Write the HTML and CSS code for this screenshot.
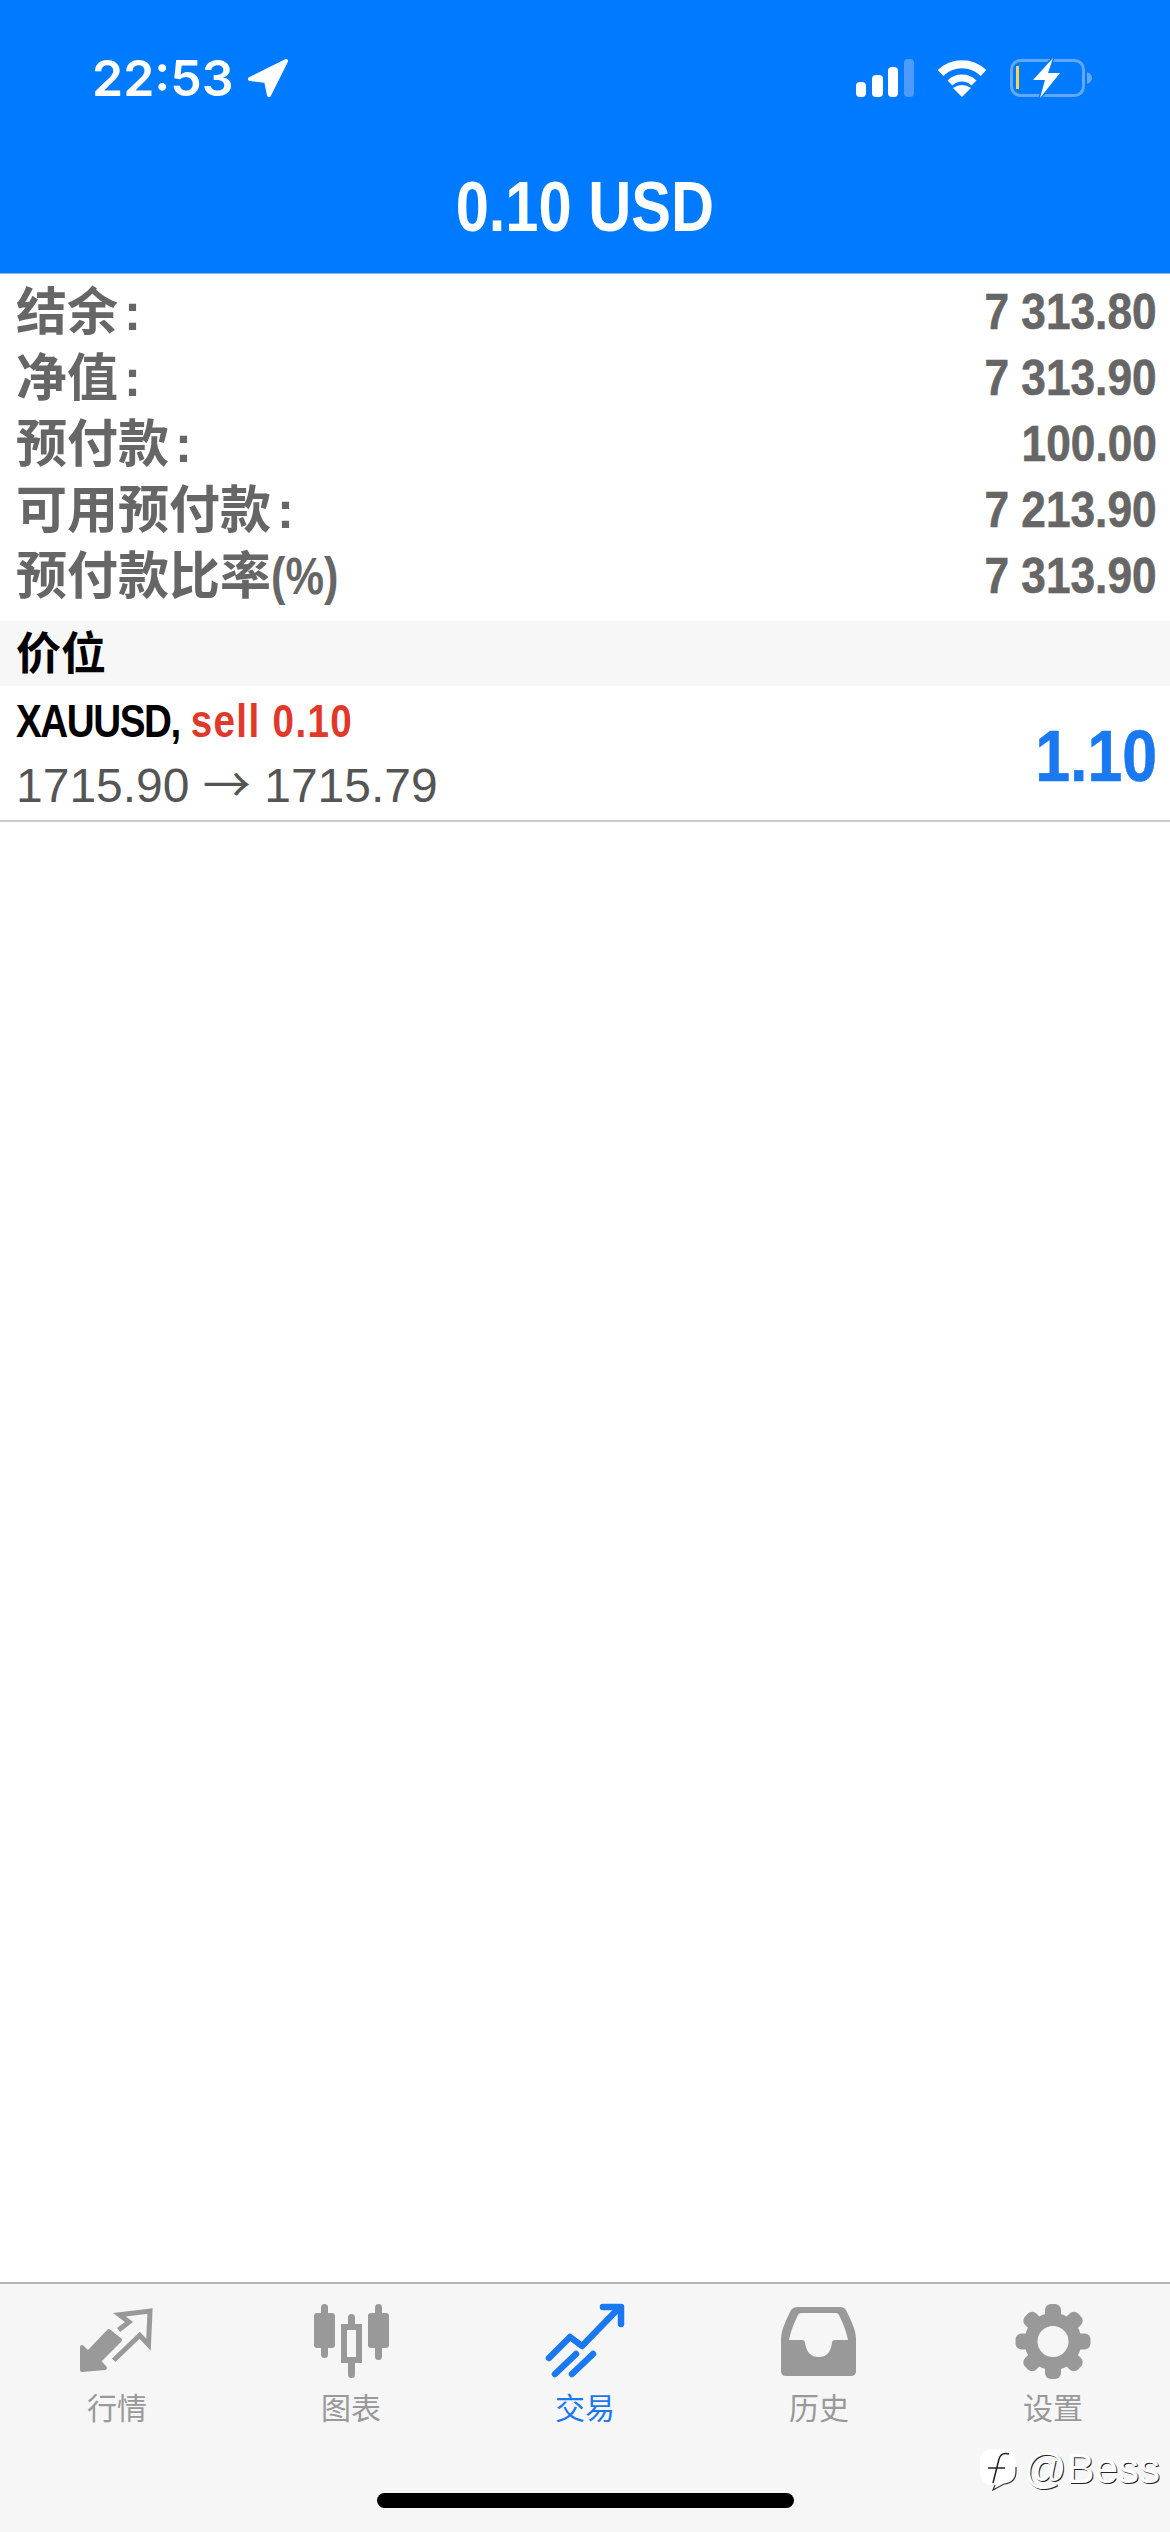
FILE: index.html
```html
<!DOCTYPE html>
<html lang="zh-CN">

<head>
    <meta charset="UTF-8">
    <meta name="viewport" content="width=device-width, initial-scale=1.0">
    <title>0.10 USD</title>
    <link rel="stylesheet" href="styles.css">
</head>

<body>
    <header class="top">
        <div class="status">
            <div class="clock">
                <span class="time">22:53</span>
                <svg class="icon-location" viewBox="0 0 40 38" width="40" height="38">
                    <path d="M38 2 L2 20 L18 22 L21 36 Z" fill="#fff" stroke="#fff" stroke-width="4" stroke-linejoin="round" />
                </svg>
            </div>
            <div class="indicators">
                <svg viewBox="0 0 58 38" width="58" height="38">
                    <rect x="0" y="23" width="10" height="15" rx="4" fill="#fff" />
                    <rect x="16" y="16" width="11" height="22" rx="4" fill="#fff" />
                    <rect x="32" y="8" width="10" height="30" rx="4" fill="#fff" />
                    <rect x="48" y="0" width="10" height="38" rx="4" fill="#4d9bff" />
                </svg>
                <svg viewBox="0 0 50 38" width="50" height="38">
                    <path d="M3.5 14 A31 31 0 0 1 46.5 14" fill="none" stroke="#fff" stroke-width="8" />
                    <path d="M13 24 A17 17 0 0 1 37 24" fill="none" stroke="#fff" stroke-width="7" />
                    <path d="M25 38 L16 29 Q25 23 34 29 Z" fill="#fff" />
                </svg>
                <svg class="icon-battery" viewBox="0 0 82 42" width="82" height="42">
                    <rect x="1.5" y="3.5" width="72" height="35" rx="9" fill="none" stroke="#62a8ff" stroke-width="3" />
                    <path d="M77 15 Q82 17 82 21 Q82 25 77 27 Z" fill="#62a8ff" />
                    <rect x="6" y="9" width="3" height="23" fill="#ffd34d" />
                    <path d="M43 1 L23 23 L35 23 L30 41 L50 16 L38 16 Z" fill="#fff" stroke="#007aff" stroke-width="3" paint-order="stroke" />
                </svg>
            </div>
        </div>
        <h1 class="title"><span>0.10 USD</span></h1>
    </header>

    <main class="content">
        <ul class="summary">
            <li class="summary-row"><span class="label">结余<i class="colon">:</i></span><b>7 313.80</b></li>
            <li class="summary-row"><span class="label">净值<i class="colon">:</i></span><b>7 313.90</b></li>
            <li class="summary-row"><span class="label">预付款<i class="colon">:</i></span><b>100.00</b></li>
            <li class="summary-row"><span class="label">可用预付款<i class="colon">:</i></span><b>7 213.90</b></li>
            <li class="summary-row"><span class="label">预付款比率<i class="percent">(%)</i></span><b>7 313.90</b></li>
        </ul>
        <h2 class="section">价位</h2>
        <div class="position">
            <div>
                <div class="position-name"><span class="symbol">XAUUSD,</span> <span class="sell">sell 0.10</span></div>
                <div class="position-price">1715.90 <span class="arrow">→</span> 1715.79</div>
            </div>
            <div class="profit">1.10</div>
        </div>
    </main>

    <nav class="tabs">
        <a class="tab">
            <svg viewBox="0 0 80 80" width="80" height="80">
                <path d="M5 68 L5 45 L11 51 L32 29 L43 38 L22 59 L28 66 Z" fill="#999" stroke="#999" stroke-width="4" stroke-linejoin="round" />
                <path d="M41.6 28 L52 20 L42.4 12.7 L73 9 L71.5 42.7 L62.7 33.3 L36.7 58.3" fill="none" stroke="#999" stroke-width="5" />
            </svg>
            <span>行情</span>
        </a>
        <a class="tab">
            <svg viewBox="0 0 80 80" width="80" height="80">
                <rect x="10" y="2" width="7" height="54" rx="3.5" fill="#999" />
                <rect x="3" y="11" width="21" height="35" rx="3" fill="#999" />
                <rect x="37" y="12" width="7" height="14" rx="3.5" fill="#999" />
                <rect x="37" y="58" width="7" height="18" rx="3.5" fill="#999" />
                <path fill-rule="evenodd" d="M30 22 H51 V61 H30 Z M36 28 V55 H45 V28 Z" fill="#999" />
                <rect x="64" y="2" width="7" height="56" rx="3.5" fill="#999" />
                <rect x="57" y="11" width="21" height="35" rx="3" fill="#999" />
            </svg>
            <span>图表</span>
        </a>
        <a class="tab active">
            <svg viewBox="0 0 80 80" width="80" height="80">
                <g fill="none" stroke="#1a78f0" stroke-width="6.5" stroke-linecap="round" stroke-linejoin="round">
                    <path d="M4 56 L25 35 L37 44 L72 8" />
                    <path d="M58 5 H76 V22" />
                    <path d="M10 72 L31 52" />
                    <path d="M27 72 L48 52" />
                </g>
            </svg>
            <span>交易</span>
        </a>
        <a class="tab">
            <svg viewBox="0 0 80 80" width="80" height="80">
                <path fill-rule="evenodd" d="M19 5 H61 Q66 5 68 10 Q77 28 77 36 V69 Q77 74 72 74 H7 Q2 74 2 69 V36 Q2 28 11 10 Q13 5 19 5 Z M22 11 Q20 11 19 13 Q12 27 10 38 H23 Q26 38 26 41 Q28 55 40 55 Q51 55 53 41 Q53 38 56 38 H69 Q67 27 60 13 Q59 11 57 11 Z" fill="#999" />
            </svg>
            <span>历史</span>
        </a>
        <a class="tab">
            <svg viewBox="0 0 80 80" width="80" height="80">
                <g fill="#999">
                    <rect x="32" y="2" width="16" height="20" rx="6" />
                    <rect x="32" y="2" width="16" height="20" rx="6" transform="rotate(45 40 39.5)" />
                    <rect x="32" y="2" width="16" height="20" rx="6" transform="rotate(90 40 39.5)" />
                    <rect x="32" y="2" width="16" height="20" rx="6" transform="rotate(135 40 39.5)" />
                    <rect x="32" y="2" width="16" height="20" rx="6" transform="rotate(180 40 39.5)" />
                    <rect x="32" y="2" width="16" height="20" rx="6" transform="rotate(225 40 39.5)" />
                    <rect x="32" y="2" width="16" height="20" rx="6" transform="rotate(270 40 39.5)" />
                    <rect x="32" y="2" width="16" height="20" rx="6" transform="rotate(315 40 39.5)" />
                </g>
                <circle cx="40" cy="39.5" r="22" fill="none" stroke="#999" stroke-width="13" />
            </svg>
            <span>设置</span>
        </a>
        <div class="home-bar"></div>
        <div class="watermark">
            <svg viewBox="0 0 40 44" width="40" height="44">
                <path d="M14 2 H26 Q38 2 38 16 V24 Q38 36 26 37 L15 43 L17 38 H14 Q2 38 2 26 V14 Q2 2 14 2 Z" fill="#fff" />
                <path d="M38 20 V24 Q38 36 26 37 L15 43 L17 38" fill="none" stroke="#333" stroke-width="1.2" />
                <path d="M31 7 Q23 5 21 12 L15 36 M10 21 H27" fill="none" stroke="#222" stroke-width="1.5" />
            </svg>
            <span>@Bess</span>
        </div>
    </nav>
</body>

</html>
```

FILE: styles.css
```css
* {
    box-sizing: border-box;
}

body {
    width: 1170px;
    height: 2532px;
    margin: 0;
    display: flex;
    flex-direction: column;
    background: #fff;
    font-family: "Liberation Sans", "Noto Sans CJK SC", sans-serif;
}

ul {
    list-style: none;
    margin: 0;
    padding: 0;
}

.top {
    height: 274px;
    background: #007aff;
    border-bottom: 1px solid #8fb4dc;
    color: #fff;
}

.status {
    height: 156px;
    padding: 0 78px 0 92px;
    display: flex;
    align-items: center;
    justify-content: space-between;
}

.clock {
    display: flex;
    align-items: center;
    gap: 14px;
}

.time {
    font-family: Inter, "Liberation Sans", sans-serif;
    font-size: 50px;
    font-weight: 600;
}

.indicators {
    display: flex;
    align-items: center;
    gap: 23px;
}

.title {
    margin: 0;
    height: 102px;
    line-height: 102px;
    text-align: center;
    font-size: 71px;
    font-weight: 700;
}

/* the app's bold latin is narrower than Liberation Sans */
.title span {
    display: inline-block;
    transform: scaleX(.84);
}

.content {
    flex: 1;
}

.summary {
    padding: 5px 13px 12px 16px;
}

.summary-row {
    height: 66px;
    display: flex;
    align-items: center;
    justify-content: space-between;
    color: #666;
    font-size: 51px;
    font-weight: 700;
}

.summary-row .label {
    margin-bottom: 9px;
}

.summary-row b {
    font-size: 50px;
    -webkit-text-stroke: .6px #666;
    transform: scaleX(.885);
    transform-origin: right center;
}

.colon {
    margin-left: 6px;
    font-style: normal;
}

.percent {
    display: inline-block;
    font-style: normal;
    transform: scaleX(.85);
    transform-origin: left center;
}

.section {
    margin: 0;
    height: 65px;
    line-height: 67px;
    padding-left: 16px;
    background: #f7f7f7;
    color: #000;
    font-size: 45px;
    font-weight: 700;
}

.position {
    height: 136px;
    padding: 0 13px 0 16px;
    display: flex;
    align-items: center;
    justify-content: space-between;
    border-bottom: 2px solid #ccc;
}

.position-name {
    height: 64px;
    line-height: 64px;
    font-size: 46px;
    font-weight: 700;
    color: #000;
    transform: scaleX(.84);
    transform-origin: left center;
}

.symbol {
    letter-spacing: -1.7px;
}

.sell {
    color: #e0392b;
    letter-spacing: 1.6px;
}

.position-price {
    height: 64px;
    line-height: 56px;
    font-size: 48px;
    color: #555;
    white-space: nowrap;
}

.arrow {
    font-family: "Noto Sans CJK SC", sans-serif;
}

.profit {
    padding-top: 6px;
    font-size: 72px;
    font-weight: 700;
    color: #1a78f0;
    -webkit-text-stroke: .6px #1a78f0;
    transform: scaleX(.87);
    transform-origin: right center;
}

.tabs {
    position: relative;
    height: 250px;
    padding-top: 18px;
    display: flex;
    align-items: flex-start;
    background: #f6f6f6;
    border-top: 2px solid #b4b4b4;
}

.tab {
    flex: 1;
    display: flex;
    flex-direction: column;
    align-items: center;
    gap: 9px;
    color: #999;
    font-size: 30px;
    line-height: 36px;
}

.tab.active {
    color: #1a78f0;
}

.home-bar {
    position: absolute;
    left: 377px;
    bottom: 24px;
    width: 417px;
    height: 15px;
    border-radius: 8px;
    background: #000;
}

.watermark {
    position: absolute;
    right: 10px;
    bottom: 39px;
    display: flex;
    align-items: center;
    gap: 6px;
    color: #fff;
    font-size: 42px;
    text-shadow: 1px 1px 0 #222;
}
```
